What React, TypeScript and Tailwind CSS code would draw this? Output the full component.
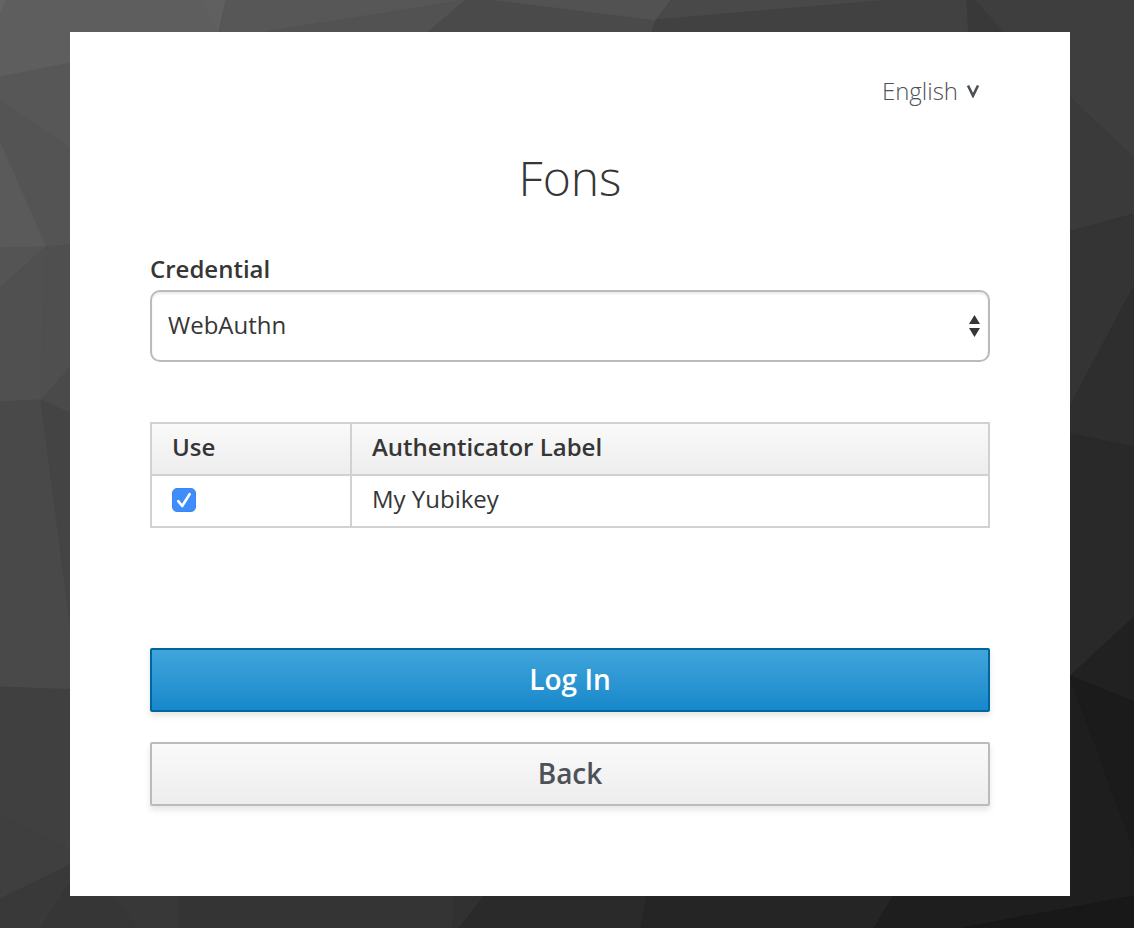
import { useState } from "react";

const facets: [string, string][] = [
  ["0,0 226,0 219,32 205,90 0,120", "#5e5e5e"],
  ["0,0 5,0 0,13", "#646464"],
  ["200,0 226,0 219,32", "#606060"],
  ["226,0 466,0 265,32 219,32", "#575757"],
  ["466,0 428,32 265,32", "#525252"],
  ["466,0 495,0 656,20 649,40 428,40 428,32", "#4a4a4a"],
  ["495,0 671,0 656,20", "#525252"],
  ["671,0 890,0 656,20", "#494949"],
  ["890,0 967,0 969,40 649,40 656,20", "#414141"],
  ["967,0 975,0 1011,40 969,40", "#393939"],
  ["975,0 1134,0 1134,158 1070,98 1004,32", "#3e3e3e"],
  ["0,77 80,61 80,155 0,101", "#575757"],
  ["0,101 80,155 80,245 46,247 0,142", "#545454"],
  ["0,142 46,247 0,248", "#5a5a5a"],
  ["0,248 46,247 0,288", "#545454"],
  ["0,288 46,247 80,244 80,356 41,400 0,402", "#505050"],
  ["46,247 80,244 80,356 41,400", "#4f4f4f"],
  ["41,400 80,356 80,418", "#4a4a4a"],
  ["0,402 41,400 80,700 0,690", "#494949"],
  ["41,400 80,418 80,700 70,620", "#444444"],
  ["0,687 80,690 80,870 0,899", "#404040"],
  ["0,816 80,855 80,860 0,899", "#3f3f3f"],
  ["0,899 80,860 80,928 0,928", "#393939"],
  ["41,928 80,866 112,896 137,928", "#363636"],
  ["112,896 179,896 179,928 137,928", "#383838"],
  ["179,890 455,890 453,928 179,928", "#343434"],
  ["455,890 489,890 459,928 453,928", "#313131"],
  ["489,890 648,890 641,928 459,928", "#2a2a2a"],
  ["648,890 897,890 874,928 641,928", "#252525"],
  ["1060,88 1134,158 1134,214 1060,234", "#3a3a3a"],
  ["1060,234 1134,214 1134,286 1060,425", "#343434"],
  ["1134,286 1070,406 1060,432 1134,447", "#2e2e2e"],
  ["1060,432 1134,447 1134,617 1070,676 1060,676", "#292929"],
  ["1070,676 1134,617 1134,702", "#212121"],
  ["1060,676 1070,676 1134,850 1134,896 962,928 874,928 897,890 1060,890", "#1e1e1e"],
  ["1070,676 1134,702 1134,850", "#1b1b1b"],
  ["962,928 1134,896 1134,928", "#181818"],
];

function Backdrop() {
  return (
    <svg
      className="absolute inset-0 -z-10 h-full w-full"
      viewBox="0 0 1134 928"
      preserveAspectRatio="xMidYMid slice"
      aria-hidden="true"
    >
      {facets.map(([points, color]) => (
        <polygon key={points} points={points} fill={color} stroke={color} strokeWidth="1" strokeLinejoin="round" />
      ))}
    </svg>
  );
}

function CredentialSelect() {
  return (
    <div className="mt-10">
      <label htmlFor="credential" className="mb-1 block leading-[34px] font-semibold">
        Credential
      </label>
      <div className="relative">
        <select
          id="credential"
          className="block h-[72px] w-full appearance-none rounded-[10px] border-2 border-[#bbb] bg-white px-4 pb-0.5 shadow-[inset_0_2px_2px_rgba(3,3,3,0.075)]"
        >
          <option>WebAuthn</option>
          <option>Password</option>
        </select>
        <svg
          className="pointer-events-none absolute top-[25px] right-[9px] h-[22px] w-[13px]"
          viewBox="0 0 13 22"
          fill="#363636"
          aria-hidden="true"
        >
          <path d="M6.5 0 12 9H1ZM1 13h11L6.5 22Z" />
        </svg>
      </div>
    </div>
  );
}

function AuthenticatorTable() {
  const [checked, setChecked] = useState(true);
  return (
    <table className="mt-15 w-full table-fixed border-collapse border-2 border-[#d1d1d1] text-left">
      <thead>
        <tr className="h-[52px] bg-linear-to-b from-[#fafafa] to-[#ededed]">
          <th className="w-[200px] border-2 border-[#d1d1d1] px-5 pb-1 font-semibold">Use</th>
          <th className="border-2 border-[#d1d1d1] px-5 pb-1 font-semibold">Authenticator Label</th>
        </tr>
      </thead>
      <tbody>
        <tr className="h-[52px]">
          <td className="border-2 border-[#d1d1d1] px-5 pb-0.5">
            <div className="relative size-6">
              <input
                id="authenticator"
                type="checkbox"
                checked={checked}
                onChange={(e) => setChecked(e.target.checked)}
                className="block size-6 appearance-none rounded-[5px] border border-[#bbb] bg-white checked:border-[#3b86f7] checked:bg-[#3f8cfb]"
              />
              {checked && (
                <svg
                  className="pointer-events-none absolute inset-0 size-6"
                  viewBox="0 0 24 24"
                  fill="none"
                  stroke="white"
                  strokeWidth="2.6"
                  strokeLinecap="round"
                  strokeLinejoin="round"
                  aria-hidden="true"
                >
                  <path d="M6.2 13.2 10.2 18 17.6 6.2" />
                </svg>
              )}
            </div>
          </td>
          <td className="border-2 border-[#d1d1d1] px-5 pb-1">
            <label htmlFor="authenticator">My Yubikey</label>
          </td>
        </tr>
      </tbody>
    </table>
  );
}

export default function App() {
  return (
    <div className="relative isolate min-h-screen overflow-hidden border-b border-[#2b2329] bg-[#292929] py-8 pr-16 pl-[70px] font-['Open_Sans',sans-serif] text-2xl text-[#363636]">
      <Backdrop />
      <main className="bg-white px-20 pt-10 pb-[90px]">
        <div className="flex justify-end pr-2.5">
          <button type="button" className="flex h-[38px] items-center gap-2 font-light text-[#4d5258]">
            English
            <svg width="14" height="14" viewBox="0 0 14 14" fill="none" stroke="#4d5258" strokeWidth="2.6" aria-hidden="true">
              <path d="M2 1.5 7 11.8 12 1.5" />
            </svg>
          </button>
        </div>
        <h1 className="mt-9 text-center text-5xl leading-16 font-light">Fons</h1>
        <form className="pt-0.5" onSubmit={(e) => e.preventDefault()}>
          <CredentialSelect />
          <AuthenticatorTable />
          <button
            type="submit"
            className="mt-30 block h-16 w-full rounded-[2px] border-2 border-[#00659c] bg-linear-to-b from-[#3fa5db] to-[#1688cb] text-[28px] font-semibold text-white shadow-[0_4px_6px_rgba(3,3,3,0.1)]"
          >
            Log In
          </button>
          <button
            type="button"
            className="mt-[30px] block h-16 w-full rounded-[2px] border-2 border-[#bbb] bg-linear-to-b from-[#fafafa] to-[#ededed] text-[28px] font-semibold text-[#4d5258] shadow-[0_4px_6px_rgba(3,3,3,0.1)]"
          >
            Back
          </button>
        </form>
      </main>
    </div>
  );
}
